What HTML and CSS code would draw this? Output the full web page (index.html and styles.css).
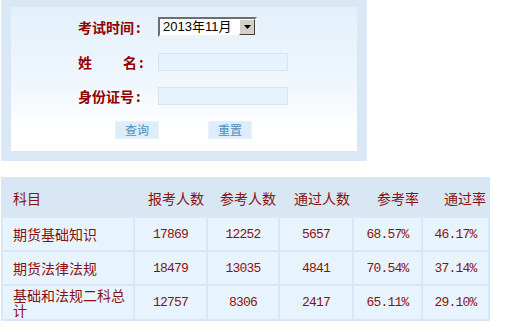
FILE: index.html
```html
<!DOCTYPE html>
<html lang="zh-CN">
<head>
<meta charset="utf-8">
<title>成绩查询</title>
<link rel="stylesheet" href="styles.css">
</head>
<body>
<div class="page">
  <div class="panel">
    <div class="panel-inner">
      <form class="query-form">
        <label class="lbl">考试时间<span class="colon">:</span></label>
        <div class="select">
          <span class="select-text">2013年11月</span>
          <span class="select-btn">
            <svg width="7" height="4" viewBox="0 0 7 4"><path d="M0 0h7L3.5 4z" fill="#000"/></svg>
          </span>
        </div>
        <label class="lbl">姓<span class="gap"></span>名<span class="colon">:</span></label>
        <div class="field"></div>
        <label class="lbl">身份证号<span class="colon">:</span></label>
        <div class="field"></div>
      </form>
      <div class="buttons">
        <span class="btn">查询</span>
        <span class="btn">重置</span>
      </div>
    </div>
  </div>

  <table class="stats">
    <thead>
      <tr>
        <th class="c1">科目</th>
        <th class="c2">报考人数</th>
        <th class="c3">参考人数</th>
        <th class="c4">通过人数</th>
        <th class="c5">参考率</th>
        <th class="c6">通过率</th>
      </tr>
    </thead>
    <tbody>
      <tr>
        <td class="name">期货基础知识</td>
        <td class="num">17869</td>
        <td class="num">12252</td>
        <td class="num">5657</td>
        <td class="num">68.57%</td>
        <td class="num">46.17%</td>
      </tr>
      <tr>
        <td class="name">期货法律法规</td>
        <td class="num">18479</td>
        <td class="num">13035</td>
        <td class="num">4841</td>
        <td class="num">70.54%</td>
        <td class="num">37.14%</td>
      </tr>
      <tr class="tall">
        <td class="name">基础和法规二科总计</td>
        <td class="num">12757</td>
        <td class="num">8306</td>
        <td class="num">2417</td>
        <td class="num">65.11%</td>
        <td class="num">29.10%</td>
      </tr>
    </tbody>
  </table>
</div>
</body>
</html>
```
FILE: styles.css
```css
html, body {
  margin: 0;
  padding: 0;
  background: #ffffff;
}
.page {
  padding-left: 1px;
  font-family: "Noto Sans CJK SC", "Liberation Sans", sans-serif;
}
.panel {
  width: 366px;
  height: 161px;
  box-sizing: border-box;
  background: #d9e8f4;
  padding: 7px 10px 10px 10px;
}
.panel-inner {
  height: 144px;
  box-sizing: border-box;
  background: linear-gradient(#e3f0fb 0%, #f0f7fd 55%, #ffffff 85%);
  padding-top: 10px;
}
.query-form {
  display: grid;
  grid-template-columns: 67px auto;
  grid-template-rows: 20px 18px 18px;
  column-gap: 13px;
  row-gap: 16px;
  margin-left: 67px;
  align-items: center;
  justify-items: start;
}
.lbl {
  font-size: 14px;
  font-weight: bold;
  color: #900000;
  line-height: 16px;
  white-space: nowrap;
}
.colon {
  margin-left: 2px;
}
.gap {
  display: inline-block;
  width: 31px;
}
.select {
  width: 99px;
  height: 20px;
  box-sizing: border-box;
  border: 2px solid;
  border-color: #6e6e6e #f2f2f2 #f2f2f2 #6e6e6e;
  background: #ffffff;
  display: flex;
  align-items: center;
  justify-content: space-between;
  padding: 0 0 0 3px;
}
.select-text {
  font-family: "Liberation Sans", "Noto Sans CJK SC", sans-serif;
  font-size: 13px;
  line-height: 14px;
  color: #000;
}
.select-btn {
  width: 16px;
  height: 16px;
  box-sizing: border-box;
  background: #d4d0c8;
  border: 1px solid;
  border-color: #ffffff #404040 #404040 #ffffff;
  display: flex;
  align-items: center;
  justify-content: center;
}
.field {
  width: 130px;
  height: 18px;
  box-sizing: border-box;
  background: #e6f2fc;
  border: 1px solid #d5e6f3;
}
.buttons {
  display: flex;
  gap: 49px;
  margin: 16px 0 0 104px;
}
.btn {
  width: 44px;
  height: 18px;
  box-sizing: border-box;
  background: #deedf9;
  border: 1px solid #e6f1fa;
  color: #4f8fbd;
  font-size: 12px;
  line-height: 16px;
  text-align: center;
}
.stats {
  margin-top: 16px;
  width: 489px;
  table-layout: fixed;
  border-collapse: separate;
  border-spacing: 2px;
  background: #d8e7f3;
  color: #8b1010;
  font-size: 14px;
}
.stats th {
  height: 37px;
  padding: 0 2px 0 0;
  font-weight: normal;
  text-align: right;
  vertical-align: middle;
  box-sizing: border-box;
  line-height: 16px;
}
.stats th.c1 {
  text-align: left;
  padding-left: 10px;
}
.c1 { width: 130px; }
.c2 { width: 71px; }
.c3 { width: 70px; }
.c4 { width: 72px; }
.c5 { width: 67px; }
.c6 { width: 65px; }
.stats td {
  height: 32px;
  background: #e8f4fd;
  padding: 0;
  vertical-align: middle;
  box-sizing: border-box;
}
.stats tr.tall td {
  height: 33px;
}
.name {
  padding-left: 10px !important;
  line-height: 15px;
}
.num {
  text-align: center;
  font-family: "Liberation Mono", "DejaVu Sans Mono", monospace;
  font-size: 13px;
  letter-spacing: -0.8px;
}
```
